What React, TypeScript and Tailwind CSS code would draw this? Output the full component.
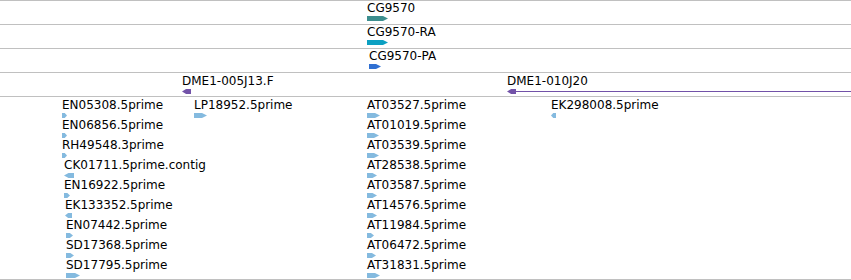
import React from "react";

type Dir = "r" | "l";
type Feat = { label: string; dx?: number; w: number; dir: Dir };

const FONT = { fontFamily: '"DejaVu Sans", "Liberation Sans", sans-serif' };
const EST = "#84badf";
const PURPLE = "#7252a8";

function Glyph({ w, dir, color, h = 5 }: { w: number; dir: Dir; color: string; h?: number }) {
  const t = Math.min(5, Math.max(2, w * 0.45));
  const pts =
    dir === "r"
      ? `0,0 ${w - t},0 ${w},${h / 2} ${w - t},${h} 0,${h}`
      : `${w},0 ${t},0 0,${h / 2} ${t},${h} ${w},${h}`;
  return (
    <svg width={w} height={h} viewBox={`0 0 ${w} ${h}`} className="block shrink-0">
      <polygon points={pts} fill={color} />
    </svg>
  );
}

function Feature({ label, w, dir, color, dx = 0 }: { label: string; w: number; dir: Dir; color: string; dx?: number }) {
  return (
    <div className="flex flex-col gap-[1px] h-[20px]" style={{ marginLeft: dx }}>
      <div className="text-[12px] leading-[14px] text-black whitespace-nowrap" style={FONT}>
        {label}
      </div>
      <Glyph w={w} dir={dir} color={color} />
    </div>
  );
}

const colA: Feat[] = [
  { label: "EN05308.5prime", w: 5, dir: "r" },
  { label: "EN06856.5prime", w: 5, dir: "r" },
  { label: "RH49548.3prime", w: 5, dir: "r" },
  { label: "CK01711.5prime.contig", dx: 2, w: 10, dir: "l" },
  { label: "EN16922.5prime", dx: 2, w: 6, dir: "r" },
  { label: "EK133352.5prime", dx: 3, w: 7, dir: "l" },
  { label: "EN07442.5prime", dx: 4, w: 7, dir: "r" },
  { label: "SD17368.5prime", dx: 4, w: 8, dir: "r" },
  { label: "SD17795.5prime", dx: 4, w: 14, dir: "r" },
];

const colC: Feat[] = [
  { label: "AT03527.5prime", w: 13, dir: "r" },
  { label: "AT01019.5prime", w: 12, dir: "r" },
  { label: "AT03539.5prime", w: 12, dir: "r" },
  { label: "AT28538.5prime", w: 10, dir: "r" },
  { label: "AT03587.5prime", w: 10, dir: "r" },
  { label: "AT14576.5prime", w: 10, dir: "r" },
  { label: "AT11984.5prime", w: 7, dir: "r" },
  { label: "AT06472.5prime", w: 9, dir: "r" },
  { label: "AT31831.5prime", w: 13, dir: "r" },
];

function GeneTrack({ x, label, w, color }: { x: number; label: string; w: number; color: string }) {
  return (
    <div className="h-[24px] border-t border-[#c0c0c0] pt-[0px]" style={{ paddingLeft: x }}>
      <Feature label={label} w={w} dir="r" color={color} />
    </div>
  );
}

export default function App() {
  return (
    <div className="w-[851px] h-[280px] bg-white overflow-hidden flex flex-col">
      <GeneTrack x={367} label="CG9570" w={21} color="#3c8e8e" />
      <GeneTrack x={367} label="CG9570-RA" w={21} color="#0ca0c2" />
      <GeneTrack x={369} label="CG9570-PA" w={12} color="#3070d2" />

      <div className="relative h-[24px] border-t border-[#c0c0c0] pt-[1px]">
        <div className="absolute left-[182px] top-[1px]">
          <Feature label="DME1-005J13.F" w={9} dir="l" color={PURPLE} />
        </div>
        <div className="absolute left-[507px] right-0 top-[1px] flex flex-col gap-[1px]">
          <div className="text-[12px] leading-[14px] text-black whitespace-nowrap" style={FONT}>
            DME1-010J20
          </div>
          <div className="flex items-center">
            <Glyph w={9} dir="l" color={PURPLE} />
            <div className="flex-1 h-[1px] bg-[#7252a8] -ml-[2px]" />
          </div>
        </div>
      </div>

      <div className="relative h-[184px] border-y border-[#c0c0c0]">
        <div className="absolute left-[62px] top-[1px] flex flex-col">
          {colA.map((f) => (
            <Feature key={f.label} label={f.label} w={f.w} dir={f.dir} dx={f.dx} color={EST} />
          ))}
        </div>
        <div className="absolute left-[194px] top-[1px]">
          <Feature label="LP18952.5prime" w={13} dir="r" color={EST} />
        </div>
        <div className="absolute left-[367px] top-[1px] flex flex-col">
          {colC.map((f) => (
            <Feature key={f.label} label={f.label} w={f.w} dir={f.dir} color={EST} />
          ))}
        </div>
        <div className="absolute left-[551px] top-[1px]">
          <Feature label="EK298008.5prime" w={5} dir="l" color={EST} />
        </div>
      </div>
    </div>
  );
}
